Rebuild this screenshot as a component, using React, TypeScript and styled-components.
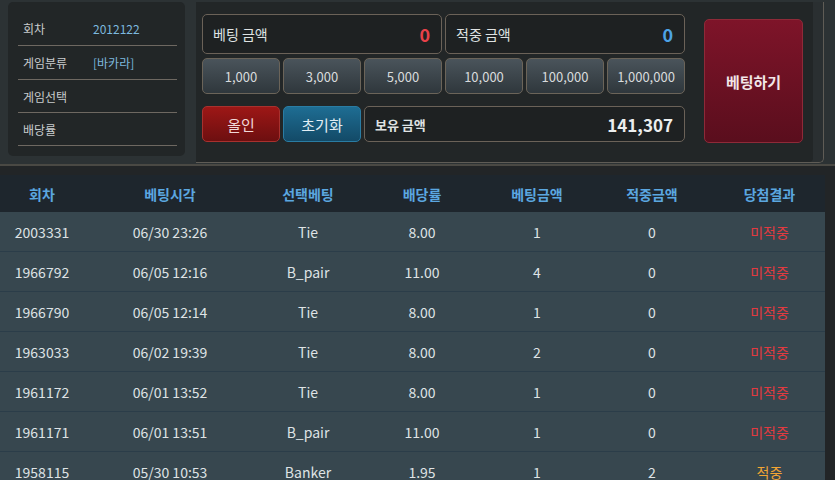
import React from "react"
import styled, { createGlobalStyle, css } from "styled-components"

const GlobalStyle = createGlobalStyle`
  html, body {
    margin: 0;
    padding: 0;
    background: #222527;
    font-family: "Noto Sans CJK KR", "Noto Sans", sans-serif;
  }
`

const Page = styled.div`
  width: 835px;
  height: 480px;
  overflow: hidden;
  background: #222527;
`

const Top = styled.div`
  display: flex;
  align-items: flex-start;
  gap: 11px;
  height: 166px;
  padding: 2px 11px 0 8px;
  box-sizing: border-box;
  background: #2c3234;
  border-bottom: 2px solid #4a4944;
`

const InfoPanel = styled.div`
  width: 178px;
  height: 154px;
  box-sizing: border-box;
  padding: 10px 8px 0 10px;
  background: #222627;
  border-radius: 5px;
`

const InfoRow = styled.div`
  display: flex;
  align-items: center;
  height: 33px;
  padding-left: 5px;
  border-bottom: 1px solid #6e6861;
  font-size: 12px;
  color: #c9cccd;
  &:nth-child(n + 3) {
    height: 32px;
  }
`

const InfoLabel = styled.span`
  width: 70px;
`

const InfoValue = styled.span`
  color: #7db8df;
`

const BetPanel = styled.div`
  flex: 1;
  display: flex;
  gap: 19px;
  height: 161px;
  box-sizing: border-box;
  padding: 12px 20px 0 6px;
  background: #222627;
  border-right: 1px solid #5f5c56;
  border-bottom: 1px solid #5f5c56;
  border-radius: 0 0 5px 0;
  box-shadow: inset -10px 0 0 #2a2f31;
`

const Controls = styled.div`
  display: grid;
  grid-template-columns: repeat(6, 78px);
  grid-template-rows: 40px 36px 4px 36px;
  column-gap: 3px;
  row-gap: 4px;
  & > :nth-child(n + 9) {
    grid-row: 4;
  }
`

const AmountBox = styled.div<{ span: number }>`
  grid-column: span ${(p) => p.span};
  display: flex;
  align-items: center;
  justify-content: space-between;
  padding: 0 11px 0 10px;
  background: #1e2122;
  border: 1px solid #6b6258;
  border-radius: 5px;
  font-size: 14px;
  color: #dfe2e2;
`

const AmountLabel = styled.span<{ bold?: boolean }>`
  font-weight: ${(p) => (p.bold ? 700 : 400)};
  font-size: ${(p) => (p.bold ? 13 : 14)}px;
`

const AmountValue = styled.span<{ color: string; size: number }>`
  font-weight: 700;
  font-size: ${(p) => p.size}px;
  color: ${(p) => p.color};
`

const buttonTones = {
  chip: css`
    background: linear-gradient(#4a545b, #2f373c);
    border-color: #6b6459;
    color: #d8dbdc;
    font-size: 13px;
  `,
  red: css`
    background: linear-gradient(#9d1716, #6d0f10);
    border-color: #a8312e;
    color: #f0d8d8;
    font-size: 15px;
  `,
  blue: css`
    background: linear-gradient(#1e6d93, #134a67);
    border-color: #2a7ca3;
    color: #e2eef4;
    font-size: 15px;
  `,
}

const Button = styled.button<{ tone: keyof typeof buttonTones }>`
  display: flex;
  align-items: center;
  justify-content: center;
  margin: 0;
  padding: 0;
  border: 1px solid;
  border-radius: 5px;
  font-family: inherit;
  ${(p) => buttonTones[p.tone]}
`

const BetButton = styled.button`
  margin-top: 5px;
  width: 99px;
  height: 124px;
  border: 1px solid #8e2a38;
  border-radius: 5px;
  background: linear-gradient(#7e1429, #5a0e1d);
  color: #f2e6e8;
  font-family: inherit;
  font-size: 15px;
  font-weight: 700;
`

const Table = styled.div`
  width: 825px;
  margin-top: 9px;
`

const cols = "84px 172px 104px 124px 106px 124px 111px"

const HeaderRow = styled.div`
  display: grid;
  grid-template-columns: ${cols};
  height: 37px;
  align-items: center;
  background: #1e262d;
  color: #5ba7e0;
  font-size: 14px;
  font-weight: 700;
  text-align: center;
`

const Row = styled.div`
  display: grid;
  grid-template-columns: ${cols};
  height: 39px;
  align-items: center;
  background: #37474f;
  border-bottom: 1px solid #2b3d49;
  color: #dfe3e5;
  font-size: 14px;
  text-align: center;
`

const Result = styled.span<{ win: boolean }>`
  color: ${(p) => (p.win ? "#f2a533" : "#e23a40")};
`

const chips = ["1,000", "3,000", "5,000", "10,000", "100,000", "1,000,000"]

const headers = ["회차", "베팅시각", "선택베팅", "배당률", "베팅금액", "적중금액", "당첨결과"]

const rows = [
  ["2003331", "06/30 23:26", "Tie", "8.00", "1", "0", false],
  ["1966792", "06/05 12:16", "B_pair", "11.00", "4", "0", false],
  ["1966790", "06/05 12:14", "Tie", "8.00", "1", "0", false],
  ["1963033", "06/02 19:39", "Tie", "8.00", "2", "0", false],
  ["1961172", "06/01 13:52", "Tie", "8.00", "1", "0", false],
  ["1961171", "06/01 13:51", "B_pair", "11.00", "1", "0", false],
  ["1958115", "05/30 10:53", "Banker", "1.95", "1", "2", true],
] as const

export default function App() {
  return (
    <Page>
      <GlobalStyle />
      <Top>
        <InfoPanel>
          <InfoRow>
            <InfoLabel>회차</InfoLabel>
            <InfoValue>2012122</InfoValue>
          </InfoRow>
          <InfoRow>
            <InfoLabel>게임분류</InfoLabel>
            <InfoValue>[바카라]</InfoValue>
          </InfoRow>
          <InfoRow>
            <InfoLabel>게임선택</InfoLabel>
          </InfoRow>
          <InfoRow>
            <InfoLabel>배당률</InfoLabel>
          </InfoRow>
        </InfoPanel>
        <BetPanel>
          <Controls>
            <AmountBox span={3}>
              <AmountLabel>베팅 금액</AmountLabel>
              <AmountValue color="#e8414a" size={18}>0</AmountValue>
            </AmountBox>
            <AmountBox span={3}>
              <AmountLabel>적중 금액</AmountLabel>
              <AmountValue color="#4da3e6" size={18}>0</AmountValue>
            </AmountBox>
            {chips.map((c) => (
              <Button key={c} tone="chip">
                {c}
              </Button>
            ))}
            <Button tone="red">올인</Button>
            <Button tone="blue">초기화</Button>
            <AmountBox span={4}>
              <AmountLabel bold>보유 금액</AmountLabel>
              <AmountValue color="#eceeee" size={17}>141,307</AmountValue>
            </AmountBox>
          </Controls>
          <BetButton>베팅하기</BetButton>
        </BetPanel>
      </Top>
      <Table>
        <HeaderRow>
          {headers.map((h) => (
            <span key={h}>{h}</span>
          ))}
        </HeaderRow>
        {rows.map((r) => (
          <Row key={r[0]}>
            <span>{r[0]}</span>
            <span>{r[1]}</span>
            <span>{r[2]}</span>
            <span>{r[3]}</span>
            <span>{r[4]}</span>
            <span>{r[5]}</span>
            <Result win={r[6]}>{r[6] ? "적중" : "미적중"}</Result>
          </Row>
        ))}
      </Table>
    </Page>
  )
}
